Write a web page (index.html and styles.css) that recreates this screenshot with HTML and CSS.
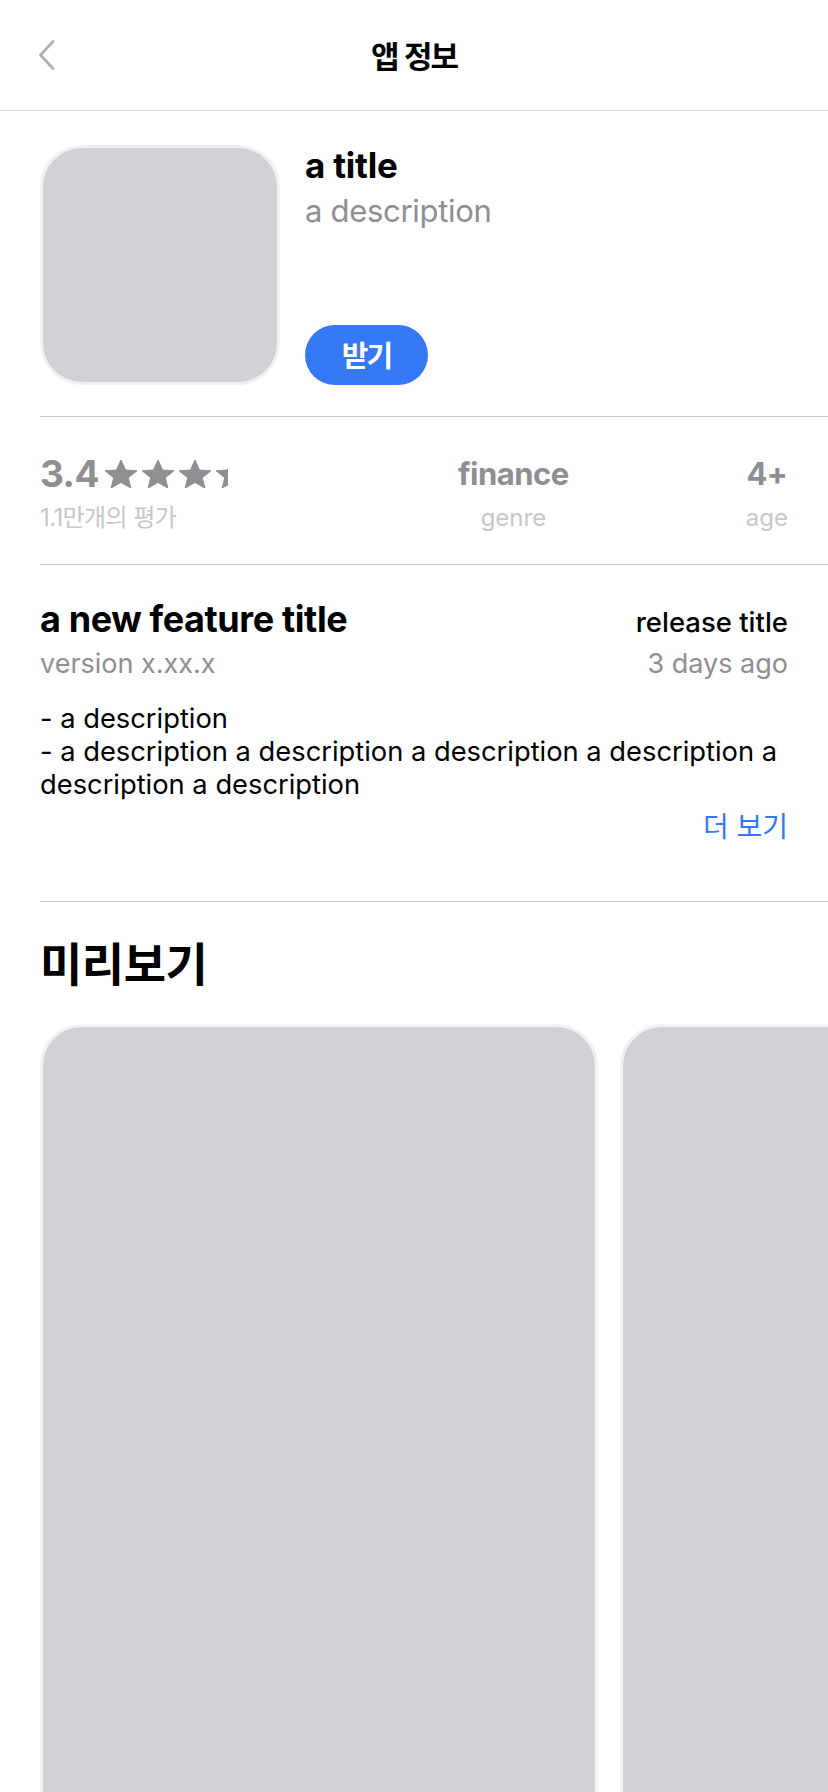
FILE: index.html
```html
<!DOCTYPE html>
<html lang="ko">
<head>
<meta charset="utf-8">
<title>앱 정보</title>
<link rel="stylesheet" href="styles.css">
</head>
<body>
<header class="topbar">
  <div class="topbar-left">
    <svg class="back" width="18" height="30" viewBox="0 0 18 30" aria-hidden="true">
      <path d="M15 1.5 L2.5 15 L15 28.5" fill="none" stroke="#aeaeb2" stroke-width="2.6" stroke-linecap="round" stroke-linejoin="round"/>
    </svg>
  </div>
  <h1 class="topbar-title">앱 정보</h1>
  <div class="topbar-right"></div>
</header>

<main>
  <section class="section app">
    <div class="app-icon"></div>
    <div class="app-info">
      <div class="app-title">a title</div>
      <div class="app-desc">a description</div>
      <button class="get-btn">받기</button>
    </div>
  </section>

  <section class="section stats">
    <div class="stat stat-rating">
      <div class="stat-value rating-line">
        <span>3.4</span>
        <span class="stars" style="width:123px">
          <svg class="star" viewBox="-0.951 -1 1.902 1.809" preserveAspectRatio="none"><path d="M0,-1 L0.2645,-0.364 L0.951,-0.309 L0.428,0.139 L0.588,0.809 L0,0.45 L-0.588,0.809 L-0.428,0.139 L-0.951,-0.309 L-0.2645,-0.364 Z"/></svg>
          <svg class="star" viewBox="-0.951 -1 1.902 1.809" preserveAspectRatio="none"><path d="M0,-1 L0.2645,-0.364 L0.951,-0.309 L0.428,0.139 L0.588,0.809 L0,0.45 L-0.588,0.809 L-0.428,0.139 L-0.951,-0.309 L-0.2645,-0.364 Z"/></svg>
          <svg class="star" viewBox="-0.951 -1 1.902 1.809" preserveAspectRatio="none"><path d="M0,-1 L0.2645,-0.364 L0.951,-0.309 L0.428,0.139 L0.588,0.809 L0,0.45 L-0.588,0.809 L-0.428,0.139 L-0.951,-0.309 L-0.2645,-0.364 Z"/></svg>
          <svg class="star" viewBox="-0.951 -1 1.902 1.809" preserveAspectRatio="none"><path d="M0,-1 L0.2645,-0.364 L0.951,-0.309 L0.428,0.139 L0.588,0.809 L0,0.45 L-0.588,0.809 L-0.428,0.139 L-0.951,-0.309 L-0.2645,-0.364 Z"/></svg>
          <svg class="star" viewBox="-0.951 -1 1.902 1.809" preserveAspectRatio="none"><path d="M0,-1 L0.2645,-0.364 L0.951,-0.309 L0.428,0.139 L0.588,0.809 L0,0.45 L-0.588,0.809 L-0.428,0.139 L-0.951,-0.309 L-0.2645,-0.364 Z"/></svg>
        </span>
      </div>
      <div class="stat-label rating-label">1.1만개의 평가</div>
    </div>
    <div class="stat stat-center">
      <div class="stat-value stat-small">finance</div>
      <div class="stat-label">genre</div>
    </div>
    <div class="stat stat-center">
      <div class="stat-value stat-small">4+</div>
      <div class="stat-label">age</div>
    </div>
  </section>

  <section class="section feature">
    <div class="feature-row">
      <div class="feature-title">a new feature title</div>
      <div class="release-title">release title</div>
    </div>
    <div class="feature-row meta-row">
      <div class="meta">version x.xx.x</div>
      <div class="meta">3 days ago</div>
    </div>
    <p class="feature-desc">- a description<br>- a description a description a description a description a description a description</p>
    <div class="more-row"><a class="more">더 보기</a></div>
  </section>

  <section class="preview">
    <h2 class="preview-title">미리보기</h2>
    <div class="shots">
      <div class="shot"></div>
      <div class="shot"></div>
    </div>
  </section>
</main>
</body>
</html>
```

FILE: styles.css
```css
* { box-sizing: border-box; }

html, body {
  margin: 0;
  padding: 0;
  background: #ffffff;
}

body {
  font-family: "Inter", "Noto Sans CJK KR", sans-serif;
  color: #000000;
  overflow-x: hidden;
}

/* ---------- top bar ---------- */
.topbar {
  height: 111px;
  display: grid;
  grid-template-columns: 1fr auto 1fr;
  align-items: center;
  border-bottom: 1px solid #dedee0;
}

.topbar-left {
  padding-left: 38px;
  display: flex;
  align-items: center;
}

.back { display: block; }

.topbar-title {
  margin: 0;
  font-family: "Noto Sans CJK KR", sans-serif;
  font-size: 31px;
  font-weight: 700;
  letter-spacing: -2px;
  line-height: 40px;
}

/* ---------- sections ---------- */
.section {
  margin-left: 40px;
  padding-right: 40px;
  border-bottom: 1px solid #c8c8cc;
}

/* app header */
.app {
  display: flex;
  padding-top: 34px;
  padding-bottom: 31px;
}

.app-icon {
  width: 240px;
  height: 240px;
  flex: none;
  border: 3px solid #f0f0f5;
  border-radius: 42px;
  background: #d1d1d6;
}

.app-info {
  display: flex;
  flex-direction: column;
  align-items: flex-start;
  padding-left: 25px;
}

.app-title {
  font-size: 35px;
  font-weight: 700;
  line-height: 40px;
  letter-spacing: -0.2px;
}

.app-desc {
  margin-top: 8px;
  font-size: 31px;
  line-height: 36px;
  color: #8e8e93;
  letter-spacing: -0.3px;
}

.get-btn {
  margin-top: auto;
  width: 123px;
  height: 60px;
  border: 0;
  border-radius: 30px;
  background: #3478f6;
  color: #ffffff;
  font-family: "Noto Sans CJK KR", sans-serif;
  font-size: 29px;
  font-weight: 700;
  letter-spacing: -2px;
  padding: 0 0 2px 0;
}

/* stats */
.stats {
  display: flex;
  justify-content: space-between;
  padding-top: 35px;
  padding-bottom: 32px;
}

.stat-rating { width: 241px; }

.stat-center { text-align: center; }

.stat-value {
  font-size: 37px;
  font-weight: 700;
  line-height: 44px;
  color: #8e8e93;
  letter-spacing: -0.5px;
}

.stat-small {
  font-size: 31px;
}

.rating-line {
  display: flex;
  align-items: center;
  gap: 6px;
}

.stars {
  display: flex;
  gap: 5px;
  overflow: hidden;
  flex: none;
}

.star {
  width: 32px;
  height: 28px;
  flex: none;
  fill: #8e8e93;
  stroke: #8e8e93;
  stroke-width: 0.06;
  stroke-linejoin: round;
}

.stat-label {
  margin-top: 8px;
  font-size: 24px;
  line-height: 28px;
  color: #c7c7cc;
}

.rating-label {
  font-size: 24px;
  letter-spacing: -0.6px;
}

/* feature */
.feature {
  padding-top: 34px;
  padding-bottom: 60px;
}

.feature-row {
  display: flex;
  justify-content: space-between;
  align-items: baseline;
}

.feature-title {
  font-size: 36px;
  font-weight: 700;
  line-height: 40px;
  letter-spacing: -0.4px;
}

.release-title {
  font-size: 27.5px;
  font-weight: 500;
  line-height: 32px;
}

.meta-row {
  margin-top: 9px;
}

.meta {
  font-size: 27px;
  line-height: 32px;
  color: #8e8e93;
}

.feature-desc {
  margin: 22px 0 0 0;
  font-size: 27.3px;
  line-height: 33px;
}

.more-row {
  margin-top: 8px;
  display: flex;
  justify-content: flex-end;
}

.more {
  font-family: "Noto Sans CJK KR", sans-serif;
  font-size: 28px;
  line-height: 32px;
  color: #3478f6;
}

/* preview */
.preview {
  padding-top: 35px;
  padding-left: 40px;
}

.preview-title {
  margin: 0;
  font-size: 46px;
  font-weight: 700;
  line-height: 54px;
  letter-spacing: -0.5px;
}

.shots {
  margin-top: 33px;
  display: flex;
  gap: 22px;
  overflow: hidden;
}

.shot {
  width: 558px;
  height: 1206px;
  flex: none;
  border: 3px solid #f0f0f5;
  border-radius: 42px;
  background: #d1d1d6;
}
```
